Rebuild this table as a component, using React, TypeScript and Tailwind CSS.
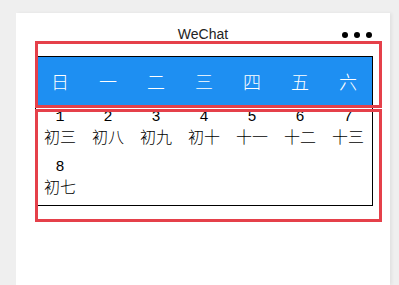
import React from 'react'

const weekdays = ['日', '一', '二', '三', '四', '五', '六']

const days = [
	{ day: 1, lunar: '初三' },
	{ day: 2, lunar: '初八' },
	{ day: 3, lunar: '初九' },
	{ day: 4, lunar: '初十' },
	{ day: 5, lunar: '十一' },
	{ day: 6, lunar: '十二' },
	{ day: 7, lunar: '十三' },
	{ day: 8, lunar: '初七' },
]

const cjk = "font-['Noto_Sans_CJK_SC',sans-serif]"

export default function App() {
	return (
		<div className="min-h-[285px] bg-[#efefef] pl-[16px] pt-[13px]">
			<div className="relative w-[374px] h-[272px] bg-white shadow-[2px_0_3px_rgba(0,0,0,0.06)]">

				<div className="grid grid-cols-[1fr_auto_1fr] items-center h-[43px]">
					<div />
					<span className="font-['Liberation_Sans',sans-serif] text-[14px] text-[#222]">WeChat</span>
					<div className="flex justify-end items-center gap-[6px] pr-[18px]">
						<span className="w-[6px] h-[6px] rounded-full bg-black" />
						<span className="w-[6px] h-[6px] rounded-full bg-black" />
						<span className="w-[6px] h-[6px] rounded-full bg-black" />
					</div>
				</div>

				<div className={`ml-[19px] w-[338px] border border-black ${cjk}`}>
					<div className="grid grid-cols-7 h-[48px] bg-[#1e8ff2] text-white text-[18px] font-light">
						{weekdays.map((w) => (
							<div key={w} className="flex items-center justify-center">{w}</div>
						))}
					</div>

					<div className="grid grid-cols-7">
						{days.map(({ day, lunar }) => (
							<div key={day} className="h-[50px] flex flex-col items-center pt-[4px] text-black">
								<span className="font-['Liberation_Mono',monospace] text-[15px] leading-[17px]">{day}</span>
								<span className="text-[16px] leading-[20px] font-light">{lunar}</span>
							</div>
						))}
					</div>
				</div>

				{/* debug outlines */}
				<div className="absolute left-[19px] top-[28px] w-[347px] h-[67px] border-[3px] border-[#e5404a]" />
				<div className="absolute left-[19px] top-[96px] w-[347px] h-[113px] border-[3px] border-[#e5404a]" />
			</div>
		</div>
	)
}
